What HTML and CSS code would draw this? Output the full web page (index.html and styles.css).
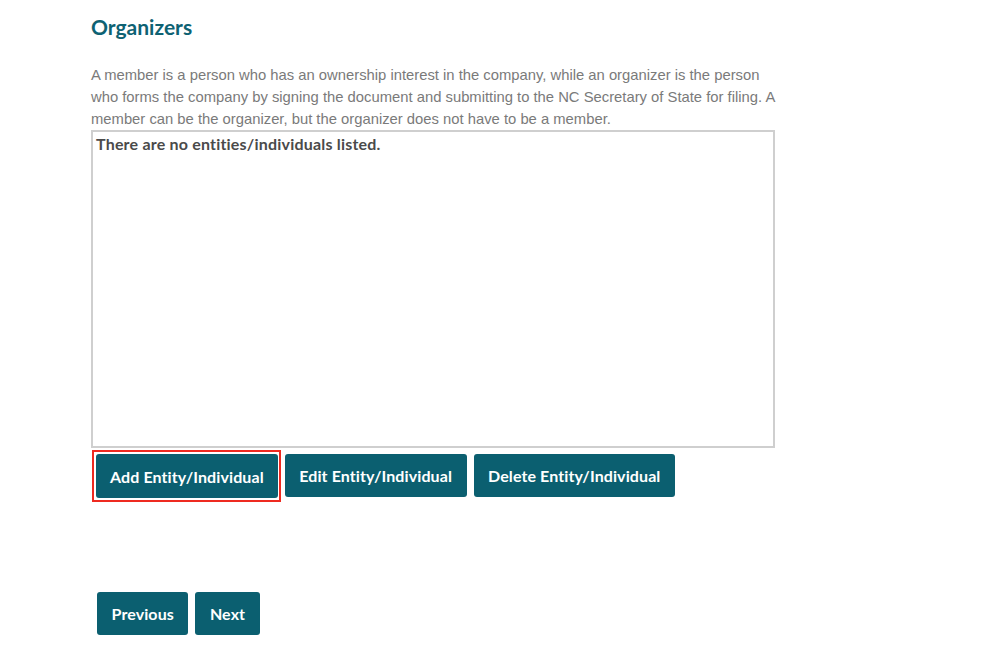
FILE: index.html
```html
<!DOCTYPE html>
<html>
<head>
<meta charset="utf-8">
<link rel="stylesheet" href="styles.css">
</head>
<body>
<main class="page">
  <h2 class="title">Organizers</h2>
  <p class="intro">A member is a person who has an ownership interest in the company, while an organizer is the person who forms the company by signing the document and submitting to the NC Secretary of State for filing. A member can be the organizer, but the organizer does not have to be a member.</p>
  <div class="listbox">There are no entities/individuals listed.</div>
  <div class="actions">
    <span class="focus-ring"><button class="btn">Add Entity/Individual</button></span>
    <button class="btn">Edit Entity/Individual</button>
    <button class="btn">Delete Entity/Individual</button>
  </div>
  <div class="nav">
    <button class="btn btn-nav">Previous</button>
    <button class="btn btn-nav">Next</button>
  </div>
</main>
</body>
</html>
```
FILE: styles.css
```css
html, body {
  margin: 0;
  padding: 0;
  background: #ffffff;
}
.page {
  padding: 14px 0 0 91px;
  width: 700px;
}
.title {
  margin: 0;
  font-family: Lato, "Open Sans", sans-serif;
  font-weight: 700;
  font-size: 21px;
  line-height: 26px;
  color: #0e6273;
}
.intro {
  margin: 24px 0 0 0;
  width: 690px;
  font-family: "Liberation Sans", Arial, sans-serif;
  font-size: 14.8px;
  line-height: 22px;
  color: #7a7a7a;
}
.listbox {
  box-sizing: border-box;
  width: 684px;
  height: 318px;
  border: 2px solid #cfcfcf;
  padding: 3px 3px;
  font-family: Lato, "Open Sans", sans-serif;
  font-weight: 700;
  font-size: 16px;
  letter-spacing: 0.2px;
  line-height: 18px;
  color: #4a4a4a;
}
.actions {
  display: flex;
  align-items: flex-start;
  gap: 7px;
  margin: 2px 0 0 1px;
}
.focus-ring {
  display: flex;
  border: 2px solid #ee2a20;
  padding: 2px 1px 2px 2px;
  margin-right: -3px;
}
.actions > .btn {
  margin-top: 4px;
  height: 43px;
  padding: 0 14.5px;
}
.btn {
  background: #0b5f70;
  color: #ffffff;
  border: none;
  border-radius: 3px;
  font-family: Lato, "Open Sans", sans-serif;
  font-weight: 700;
  font-size: 16px;
  letter-spacing: 0.1px;
  height: 44px;
  padding: 0 14px;
  cursor: pointer;
}
.nav {
  display: flex;
  gap: 7px;
  margin: 90px 0 0 6px;
}
.btn-nav {
  height: 43px;
  padding: 0 14.5px;
}
```
